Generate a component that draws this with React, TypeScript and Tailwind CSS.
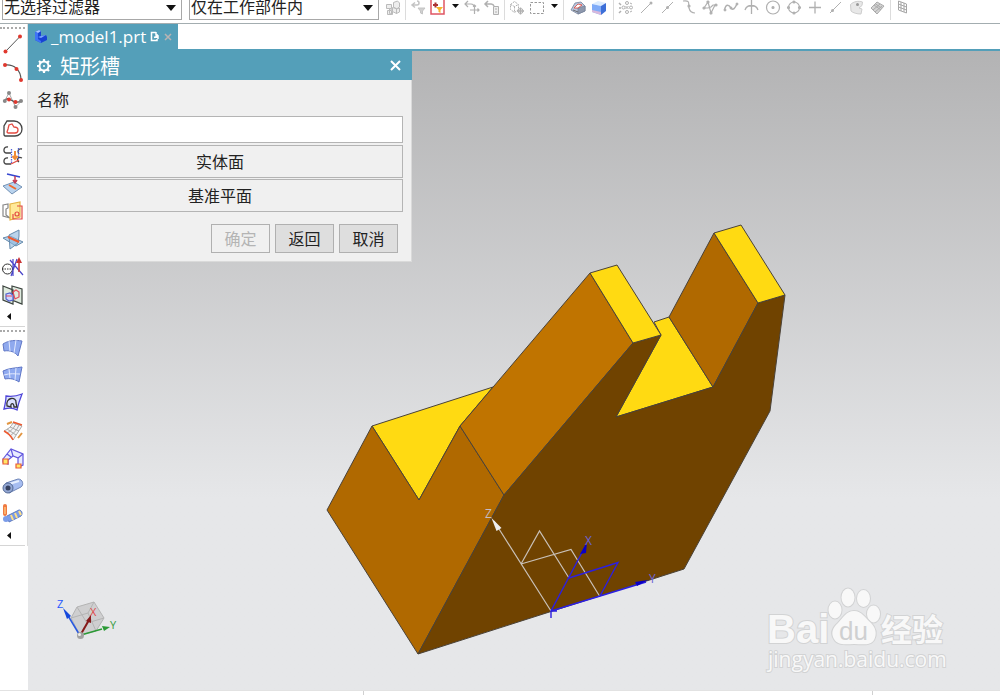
import type { ReactNode } from "react"

const GREY = "#b0b0b0"

const Caret = () => (
    <svg width="10" height="6" viewBox="0 0 10 6" aria-hidden="true">
        <path d="M0 0h10L5 6z" fill="#111" />
    </svg>
)

const Divider = () => <span className="mx-0.5 h-6 w-px shrink-0 bg-[#dcdcdc]" />

const FilterSelect = ({ label, value, width }: { label: string; value: string; width: string }) => (
    <span className={`relative shrink-0 ${width}`}>
        <select
            aria-label={label}
            className="block h-[27px] w-full appearance-none border border-[#a8a8a8] bg-white pl-px text-base leading-6 text-[#222]"
        >
            <option>{value}</option>
        </select>
        <span className="pointer-events-none absolute right-[6px] bottom-[9px] flex">
            <Caret />
        </span>
    </span>
)

// 16x16 icons of the selection bar
const topIcons: Record<string, ReactNode> = {
    "Selection scope": (
        <g fill="#eee" stroke="#bbb">
            <path d="M1.500 4.500h5v4h-5zM2.500 10.500h4v4h-4zM4.500 8.500l3 1v5l-3-1z" />
            <path d="M8.500 2.500l4-1.500 2 2v4l-3 2-3-2zM7.500 7.500l4 1v5l-4-2z" />
            <path d="M11.500 9l3-1v4l-3 1.500z" />
        </g>
    ),
    "Reset filters": (
        <g fill="none" stroke="#c4c4c4" strokeWidth="1.500">
            <path d="M2 5h5a2 2 0 0 0 0-4M5 2.500L2 5l3 2.500" />
            <path d="M8 8h7l-2.500 3v3l-2-1v-2z" fill="#d0d0d0" strokeWidth="1" />
        </g>
    ),
    "Add filter": (
        <g>
            <path d="M1-3h13v17H1z" fill="#fff" stroke="#e05563" strokeWidth="1.500" />
            <path d="M3 5h5M5.500 2.500v5" stroke="#a33" strokeWidth="2" />
            <path d="M6 7h7l-2.500 3v3l-2-1v-2z" fill="#f5b52c" />
        </g>
    ),
    "Snap reset": (
        <g fill="none" stroke={GREY} strokeWidth="1.200">
            <path d="M1 4h6a3 3 0 0 1 3 3M4 1L1 4l3 3" />
            <path d="M6 10h9M10.500 5v9M9 6.500L10.500 5 12 6.500M13.500 8.500L15 10l-1.500 1.500" />
        </g>
    ),
    "Snap list": (
        <g fill="none" stroke={GREY}>
            <path d="M1 4h6a3 3 0 0 1 3 2M4 1L1 4l3 3" strokeWidth="1.500" />
            <path d="M9.500 6.500h5v8h-5zM11 9h2M11 12h2" fill="#eee" />
        </g>
    ),
    "Deselect": (
        <g fill="none" stroke={GREY}>
            <path d="M1.500 4.500l4-3 4 3v5l-4 3-4-3zM1.500 4.500l4 2 4-2M5.500 6.500v6" strokeDasharray="2 1" />
            <path d="M8 11h7M11.500 7.500v7" strokeWidth="1.300" />
            <circle cx="11.500" cy="11" r="2.500" />
        </g>
    ),
    "Rectangle select": <path d="M1.500 2.500h13v11h-13z" fill="none" stroke="#999" strokeDasharray="2.500 1.500" />,
    "Shaded body": (
        <g stroke="#77839a" strokeWidth=".8">
            <path d="M1 10l4-7 6-1 4 4v5l-7 3z" fill="#b9c5dc" />
            <path d="M8 14V8l7-2v5z" fill="#8e98ad" />
            <path d="M4 8l4-4 4 1-4 3z" fill="#fff" stroke="#dd4438" />
            <path d="M3 10l5 2" stroke="#555" />
        </g>
    ),
    "Blue cube": (
        <g>
            <path d="M1 4l6-3 8 2-5 3z" fill="#dcecff" />
            <path d="M1 4l9 2v9l-9-3z" fill="#7fabf8" />
            <path d="M10 6l5-3v8l-5 4z" fill="#3d6fd8" />
            <path d="M1 10l9 2v3l-9-3z" fill="#d9b9dc" />
        </g>
    ),
    "Enable snap": (
        <g fill="none" stroke={GREY}>
            <path d="M1 3l2 2M1 8h2M1 13l2-2" strokeWidth="1.500" />
            <circle cx="9" cy="3" r="1.500" />
            <circle cx="13" cy="7.500" r="1.500" />
            <circle cx="9" cy="12" r="1.500" />
            <circle cx="5.500" cy="7.500" r="1.500" />
            <path d="M7.500 6l3 3M10.500 6l-3 3M12 3l2 1M12 12l2-1" />
        </g>
    ),
    "End point": (
        <g stroke={GREY} fill={GREY}>
            <path d="M2 13L12 3" />
            <circle cx="12" cy="3" r="1.500" stroke="none" />
        </g>
    ),
    "Mid point": (
        <g stroke={GREY} fill={GREY}>
            <path d="M2 13L13 2" />
            <circle cx="7.500" cy="7.500" r="1.500" stroke="none" />
        </g>
    ),
    "Control point": (
        <g stroke={GREY} fill="none" strokeWidth="1.200">
            <path d="M2 1c8-1 5 3 6 7s3 5 6 5" />
            <circle cx="8" cy="6" r="1" fill={GREY} />
        </g>
    ),
    "Pole": (
        <g stroke={GREY} fill="none" strokeWidth="1.200">
            <path d="M2 8l4-6 3 11 4-8M2 8h4l3-1 2-2h3" />
            <g fill={GREY}>
                <circle cx="2" cy="8" r="1" />
                <circle cx="6" cy="2" r="1" />
                <circle cx="9" cy="13" r="1" />
                <circle cx="14" cy="5" r="1" />
            </g>
        </g>
    ),
    "Spline point": (
        <g stroke={GREY} fill="none" strokeWidth="1.500">
            <path d="M1.500 10C3 3 6 5 8 8s4 0 6-4" />
            <g fill={GREY} strokeWidth="1">
                <circle cx="2" cy="10" r="1" />
                <circle cx="8" cy="8" r="1" />
                <circle cx="14" cy="4" r="1" />
            </g>
        </g>
    ),
    "Intersection": <path d="M1 10c2-6 11-6 13 0M7.500 0v14M5 6h5" fill="none" stroke={GREY} strokeWidth="1.300" />,
    "Arc center": (
        <g fill="none" stroke={GREY} strokeWidth="1.200">
            <circle cx="8" cy="7.500" r="6.500" />
            <circle cx="8" cy="7.500" r="1" fill={GREY} />
        </g>
    ),
    "Quadrant point": (
        <g fill="none" stroke={GREY} strokeWidth="1.200">
            <circle cx="8" cy="7.500" r="5.500" />
            <g fill="#b9b9b9">
                <circle cx="8" cy="2" r="1" />
                <circle cx="8" cy="13" r="1" />
                <circle cx="2.500" cy="7.500" r="1" />
                <circle cx="13.500" cy="7.500" r="1" />
            </g>
        </g>
    ),
    "Existing point": <path d="M2 7.500h12M8 1.500v12" stroke={GREY} strokeWidth="1.300" />,
    "Point on curve": (
        <g stroke={GREY} fill={GREY}>
            <path d="M2 13L13 2" />
            <circle cx="4.500" cy="10.500" r="1.500" stroke="none" />
        </g>
    ),
    "Point on face": (
        <g stroke="#cdcdcd" fill="#e8e8e8">
            <path d="M1.500 4.500c3-3 8-4 12-2.500l-.5 3.500-3 2.500 3 1-1 5c-4 0-8-1-10-3z" />
            <circle cx="8.500" cy="4.500" r="1.500" fill="#999" stroke="none" />
        </g>
    ),
    "Point on facet": (
        <path d="M1 8l6-6 7 4-7 8zM4 5l7 5M5 3.500l7 5M3 10l7-6M5 12l7-6" fill="#d4d4d4" stroke="#ababab" />
    ),
    "Grid": (
        <path d="M3.500 1l8 3v9l-8-3zM3.500 4l8 3M3.500 7l8 3M6 2v9M9 3v9" fill="none" stroke="#a6a6a6" />
    ),
}

const TopTool = ({ name }: { name: string }) => (
    <button type="button" title={name} aria-label={name} className="mb-1 flex h-4 w-5 shrink-0 items-center justify-center">
        <svg width="16" height="16" viewBox="0 0 16 16" className="overflow-visible" aria-hidden="true">
            {topIcons[name]}
        </svg>
    </button>
)

const TopCaret = ({ name }: { name: string }) => (
    <button type="button" aria-label={name} className="mb-3 flex w-[14px] shrink-0 justify-center">
        <svg width="7" height="4" viewBox="0 0 7 4" aria-hidden="true">
            <path d="M0 0h7L3.500 4z" fill="#111" />
        </svg>
    </button>
)

const snapTools = [
    "Enable snap", "End point", "Mid point", "Control point", "Pole", "Spline point", "Intersection",
    "Arc center", "Quadrant point", "Existing point", "Point on curve", "Point on face", "Point on facet",
]

function SelectionBar() {
    return (
        <header className="flex h-6 shrink-0 items-end overflow-hidden border-b border-[#a3adb0] bg-white pb-[3px] pl-0.5">
            <FilterSelect label="类型过滤器" value="无选择过滤器" width="mr-[7px] w-[180px]" />
            <FilterSelect label="选择范围" value="仅在工作部件内" width="mr-1 w-[190px]" />
            <TopTool name="Selection scope" />
            <Divider />
            <TopTool name="Reset filters" />
            <TopTool name="Add filter" />
            <TopCaret name="More filters" />
            <TopTool name="Snap reset" />
            <TopTool name="Snap list" />
            <Divider />
            <TopTool name="Deselect" />
            <TopTool name="Rectangle select" />
            <TopCaret name="More selection shapes" />
            <Divider />
            <div className="flex gap-px px-0.5">
                <TopTool name="Shaded body" />
                <TopTool name="Blue cube" />
            </div>
            <Divider />
            <div className="flex gap-px">
                {snapTools.map((name) => <TopTool key={name} name={name} />)}
            </div>
            <Divider />
            <TopTool name="Grid" />
        </header>
    )
}

// 20x20 icons of the two docked tool groups
const curveIcons: Record<string, ReactNode> = {
    "Line": (
        <g fill="#e0382e">
            <path d="M2.500 17.500L17 2.500" stroke="#555" />
            <circle cx="2.500" cy="17.500" r="2" />
            <circle cx="17" cy="2.500" r="2" />
        </g>
    ),
    "Arc": (
        <g fill="#e0382e">
            <path d="M2 3c9-1 16 5 16 15" fill="none" stroke="#555" strokeWidth="1.300" />
            <circle cx="2" cy="3" r="2" />
            <circle cx="13.500" cy="7" r="2" />
            <circle cx="18" cy="18" r="2" />
        </g>
    ),
    "Studio spline": (
        <g fill="#888">
            <path d="M1.500 11L6 3l6.500 14 6-6" fill="none" stroke="#aaa" />
            <path d="M1.500 11C4 8 5 8 8 10s7 3 10 1" fill="none" stroke="#555" strokeWidth="1.300" />
            <circle cx="6" cy="3" r="2" />
            <circle cx="1.800" cy="11" r="2" />
            <circle cx="12.500" cy="17" r="2" />
            <circle cx="18" cy="11" r="2" />
            <circle cx="6" cy="9.500" r="2" fill="#e0382e" />
            <circle cx="12.500" cy="12" r="2" fill="#e0382e" />
        </g>
    ),
    "Offset curve": (
        <g fill="none">
            <path d="M1 17V8l3-5h7c5 0 8 4 8 8s-3 7-7 7H2z" stroke="#444" strokeWidth="1.300" />
            <path d="M5 15l-1-1 1-3 1-4 3-1 2 3c3 0 4 1 4 3s-1 3-3 3z" stroke="#e34b42" strokeWidth="1.300" />
        </g>
    ),
    "Bridge curve": (
        <g fill="none" strokeWidth="1.300">
            <path d="M5 1C0 0 0 7 3 7h5M5 12c-5-1-5 6-2 6h5M19 3c-4-1-5 3-3 5M19 12c-4-2-6 2-3 4" stroke="#444" />
            <path d="M8.500 3v14M15.500 2v11" stroke="#5364dd" strokeDasharray="1.500 1" />
            <path d="M12 5v8M9.500 10l2.500 3 2.500-3" stroke="#f18b37" strokeWidth="2" />
            <path d="M8 18l8-4" stroke="#e34b42" />
        </g>
    ),
    "Project curve": (
        <g>
            <path d="M0 12l11-4 8 5-10 7z" fill="#b9d3ee" stroke="#7391b4" />
            <path d="M4 0l13 3" stroke="#3546d0" strokeWidth="1.500" />
            <path d="M12 2v6M10 6l2 3 2-3" stroke="#c33d55" strokeWidth="1.500" fill="none" />
            <path d="M6 11l7 4" stroke="#f06b2b" strokeWidth="2" />
        </g>
    ),
    "Combined projection": (
        <g fill="none" strokeWidth="1.200">
            <path d="M0 3l5-1v4l-2 1v6l4 3-7-2z" stroke="#888" />
            <path d="M7 2l10-2v15L7 18z" fill="#ffe998" stroke="#e4b343" />
            <path d="M14 4h5v13h-9v-5" stroke="#e34b42" />
            <circle cx="14" cy="12" r="2" stroke="#e34b42" />
        </g>
    ),
    "Intersection curve": (
        <g stroke="#668bad">
            <path d="M0 8l7-2 13 6-7 4z" fill="#bad3e9" />
            <path d="M6 5l10-5v6l-1 7-8 6z" fill="#8eb7dd" fillOpacity=".6" />
            <path d="M5 7l11 5" stroke="#ef5a30" strokeWidth="2" />
        </g>
    ),
    "Section curve": (
        <g fill="none">
            <circle cx="4.500" cy="11" r="5" stroke="#333" />
            <path d="M-1 11h11" stroke="#333" strokeDasharray="1.500 1" />
            <path d="M7 2l13 15M14 1L8 18M10 1v17" stroke="#4944c9" strokeWidth="1.200" />
            <path d="M16 3v11" stroke="#c93434" strokeWidth="1.500" />
            <path d="M13 5l3-6 3 6z" fill="#c93434" />
        </g>
    ),
    "Isoparametric": (
        <g strokeWidth="1.200">
            <path d="M0 0l10 4v14L0 14zM9 0l10 3v15L9 14z" fill="#dfebdf" stroke="#3c443f" />
            <path d="M3 8l4-1 3 2v5l-4 1-3-2z" fill="#cdd6ff" stroke="#5261cf" />
            <path d="M10 6l3-2 3 2v5l-4 2zM3 10h6" fill="none" stroke="#e34b5c" />
        </g>
    ),
}

const surfaceIcons: Record<string, ReactNode> = {
    "Ruled": (
        <g stroke="#6077c6">
            <path d="M0 7c6-4 13-4 19-3l-4 15C12 15 7 13 1 14z" fill="#8fa9ee" />
            <path d="M6 4l1 10M13 3l-2 13" fill="none" stroke="#e3eaff" />
        </g>
    ),
    "Curve mesh": (
        <g stroke="#6077c6">
            <path d="M0 6c6-3 13-3 19-4l-3 15C12 14 7 13 2 14z" fill="#8faaf0" />
            <path d="M6 4l1 9M13 3l-1 12M1 10c6-2 11-1 16-1" fill="none" stroke="#e3eaff" />
        </g>
    ),
    "Studio surface": (
        <g fill="none">
            <path d="M3 3c6 1 11 0 16-2-2 5-4 11-5 16-5-3-9-2-13-1 1-4 2-9 2-13z" fill="#dbe1ff" stroke="#4f45d8" strokeWidth="1.300" />
            <path d="M4 13c-2-9 10-10 9-3l1 4h-3c0-5-4-4-3 0z" stroke="#333" strokeWidth="1.300" />
        </g>
    ),
    "Extension": (
        <g fill="none">
            <path d="M10 2l9 3c-3 5-6 9-9 14-2-4-5-7-9-9 4-2 7-4 9-8z" fill="#f3f3f3" stroke="#aaa" />
            <path d="M13 3c-3 5-5 7-9 9M16 4c-2 5-5 8-9 11M7 6l9 4M4 8l9 6" stroke="#aaa" />
            <path d="M1 10c4 2 7 5 9 9M10 1l9 3" stroke="#ef5a30" strokeWidth="1.500" />
            <path d="M4 3l5-2M15 17l4-5" stroke="#e29642" strokeWidth="2" />
        </g>
    ),
    "Swept": (
        <g fill="none" stroke="#6257de" strokeWidth="1.200">
            <path d="M0 10L8 0l12 5v11l-5 2V9l-5-2-5 4v4l-5-2z" fill="#e8ecff" />
            <path d="M8 0l2 7M15 9l5-4M4 5l4 3" />
            <path d="M0 10h5v5H0zM13 15h5v4h-5z" fill="#ffe768" stroke="#eb5c36" />
        </g>
    ),
    "Tube": (
        <g>
            <path d="M6 16L18 10c3-2 2-8-3-8L3 6z" fill="#a6bdf1" stroke="#7187b9" />
            <path d="M6 7l10-3" stroke="#e6efff" strokeWidth="2" />
            <ellipse cx="5" cy="11" rx="5" ry="5" fill="#93a7d3" stroke="#526894" />
            <ellipse cx="5" cy="11" rx="2.500" ry="2.500" fill="#36415f" />
        </g>
    ),
    "Sweep along guide": (
        <g>
            <path d="M4 11l12-6c3 0 4 4 2 6L6 17z" fill="#7b9ce8" stroke="#5f7bc0" strokeLinejoin="round" />
            <path d="M8 10l2 5M12 8l2 5M16 6l2 4" stroke="#ffe086" strokeWidth="2" />
            <path d="M2 1v8" stroke="#ef7940" strokeWidth="4" strokeLinecap="round" />
            <path d="M2 2v7" stroke="#ffc278" strokeWidth="1.500" />
            <circle cx="3" cy="14" r="3" fill="#7b9ce8" />
        </g>
    ),
}

const ToolGroup = ({ icons, label }: { icons: Record<string, ReactNode>; label: string }) => (
    <div role="toolbar" aria-label={label} className="flex flex-col items-center border-b border-[#d5d5d5] pt-[3px] pb-1">
        <div className="mb-px w-full border-t-2 border-dotted border-[#aaa]" />
        {Object.entries(icons).map(([name, icon]) => (
            <button key={name} type="button" title={name} aria-label={name} className="flex h-7 w-full items-center justify-center">
                <svg width="20" height="20" viewBox="0 0 20 20" className="overflow-visible" aria-hidden="true">{icon}</svg>
            </button>
        ))}
        <button type="button" aria-label="More" className="flex h-3 w-full items-center pl-[7px]">
            <svg width="4" height="7" viewBox="0 0 4 7" aria-hidden="true"><path d="M4 0v7L0 3.500z" fill="#111" /></svg>
        </button>
    </div>
)

const YELLOW = "#ffda12"
const OCHRE = "#b06900"

const faces = [
    { fill: YELLOW, points: "372,426 493,387 460,426 419,500" },
    { fill: OCHRE, points: "327,510 372,426 419,500 460,426 504,495 418,654" },
    { fill: "#c07400", points: "460,426 590,273 633,343 504,495" },
    { fill: YELLOW, points: "654,322 669,317 713,387 616,417 661,335" },
    { fill: OCHRE, points: "669,317 714,233 758,303 713,387" },
    { fill: "#704300", points: "418,654 504,495 633,343 661,335 616,417 713,387 758,303 785,295 770,411 684,569" },
    { fill: YELLOW, points: "590,273 617,265 661,335 633,343" },
    { fill: YELLOW, points: "714,233 741,225 785,295 758,303" },
]

const SolidModel = () => (
    <svg className="h-full w-full" viewBox="28 51 972 639" role="img" aria-label="model1">
        <g stroke="#4a4238" strokeWidth="1" strokeLinejoin="round">
            {faces.map((face) => <polygon key={face.points} fill={face.fill} points={face.points} />)}
        </g>
        {/* datum coordinate system */}
        <g fill="none" stroke="#c9c1b8" strokeWidth="1.200">
            <path d="M551 611L494 521M521 564L539.500 531 569 578M521 564L571 549.500 599.500 596" />
            <path d="M491.500 518l10 10-5 3z" fill="#eee" stroke="none" />
        </g>
        <g fill="none" stroke="#2c1fe0" strokeWidth="1.400">
            <path d="M551 618v-7L586 545M551 611L646 582M569 578L618 562.500 600 596M551 611h6" />
            <path d="M587 542l-1 11-6 1zM648 580l-11 6-2-4z" fill="#0a00c4" stroke="none" />
        </g>
        <g className="font-['Open_Sans',sans-serif] text-[12px]" fill="#c4bdc6">
            <text x="485" y="518">Z</text>
            <text x="585" y="545" fill="#6c63d8">X</text>
            <text x="649" y="583" fill="#6c63d8">Y</text>
        </g>
    </svg>
)

const ViewTriad = () => (
    <svg className="absolute bottom-11 left-5" width="72" height="50" viewBox="48 596 72 50" aria-hidden="true">
        <path d="M77 607l17-5 10 16-8 13-16 4-9-17z" fill="#cfcfd0" stroke="#b4b4b4" />
        <path d="M77 607l10 16 17-5M87 623l-7 12M71 618l17-5 6-11M88 613l8 18" fill="none" stroke="#b4b4b4" />
        <path d="M79 634L67 614" stroke="#2858e0" strokeWidth="1.500" />
        <path d="M63 608l8 8-4 3z" fill="#1548dc" />
        <path d="M81 635l21-6" stroke="#2b9a35" strokeWidth="1.500" />
        <path d="M110 627l-8-1 2 5z" fill="#2b9a35" />
        <path d="M81 634l8-14" stroke="#861a1a" strokeWidth="2" />
        <path d="M91 615v8l-5-2z" fill="#861a1a" />
        <circle cx="80.500" cy="635.500" r="3.500" fill="#a2a2a2" />
        <circle cx="79.500" cy="634.500" r="1.500" fill="#eee" />
        <g className="font-['Open_Sans',sans-serif] text-[11px]">
            <text x="57" y="608" fill="#2858ff">Z</text>
            <text x="90" y="616" fill="#e04545">X</text>
            <text x="110" y="629" fill="#369a3e">Y</text>
        </g>
    </svg>
)

const Watermark = () => (
    <svg className="absolute right-12 bottom-3" width="190" height="94" viewBox="762 584 190 94" aria-hidden="true">
        <g fill="#f8f8f8" stroke="#d2d3d4" strokeWidth="2" paintOrder="stroke">
            <text x="767" y="643" className="font-['Liberation_Sans',sans-serif] text-[40px] font-bold">Bai</text>
            <ellipse cx="835" cy="610" rx="6.500" ry="8.500" />
            <ellipse cx="848" cy="597.500" rx="6.500" ry="9" />
            <ellipse cx="863.500" cy="598.500" rx="6.500" ry="8.500" />
            <ellipse cx="873.500" cy="614" rx="6.500" ry="8.500" />
            <path d="M854 611c-8 0-11 7-16 12-6 5-7 11-4 16 4 7 12 5 20 5s16 2 20-4c3-6 2-12-3-17-6-5-9-12-17-12z" />
            <text x="881" y="641" className="font-['Noto_Sans_CJK_SC',sans-serif] text-[31px] font-bold">经验</text>
            <text x="768" y="667" className="font-['Open_Sans',sans-serif] text-[21px]">jingyan.baidu.com</text>
        </g>
        <text x="839" y="640" fill="#cfd0d1" className="font-['Liberation_Sans',sans-serif] text-[26px]">du</text>
    </svg>
)

const GearIcon = () => (
    <svg width="14" height="14" viewBox="0 0 14 14" fill="none" stroke="#fff" aria-hidden="true">
        <circle cx="7" cy="7" r="4.500" strokeWidth="2" />
        <path d="M7 0v2.500M7 11.500V14M0 7h2.500M11.500 7H14M2 2l1.800 1.800M10.200 10.200L12 12M2 12l1.800-1.800M10.200 3.800L12 2" strokeWidth="2.200" />
        <circle cx="7" cy="7" r="1" fill="#fff" stroke="none" />
    </svg>
)

const wideButton = "h-[33px] w-full border border-[#b4b4b4] bg-[#f0f0f0]"
const footButton = "h-[29px] w-[59px] border border-[#b0b0b0] bg-[#dedede] disabled:bg-[#f0f0f0] disabled:text-[#b4b4b4]"

function SlotDialog() {
    return (
        <section
            role="dialog"
            aria-labelledby="slot-title"
            className="absolute top-0 left-0 w-96 border-r border-b border-[#dadada] bg-[#f0f0f0] text-base text-[#222]"
        >
            <div className="-mr-px flex h-[29px] items-center bg-[#549fb9] pr-2.5 pl-[9px] text-white">
                <GearIcon />
                <h1 id="slot-title" className="ml-[9px] pt-0.5 text-xl leading-7">矩形槽</h1>
                <button type="button" aria-label="关闭" className="ml-auto p-px">
                    <svg width="11" height="11" viewBox="0 0 11 11" stroke="#fff" strokeWidth="2" aria-hidden="true">
                        <path d="M1 1l9 9M10 1l-9 9" />
                    </svg>
                </button>
            </div>
            <form className="py-2 pr-2 pl-[9px]" onSubmit={(e) => e.preventDefault()}>
                <label htmlFor="slot-name" className="block leading-6">名称</label>
                <input id="slot-name" type="text" className="mt-1 block h-[27px] w-full border border-[#b4b4b4] bg-white px-1" />
                <div className="mt-0.5 flex flex-col gap-px">
                    <button type="button" className={wideButton}>实体面</button>
                    <button type="button" className={wideButton}>基准平面</button>
                </div>
                <div className="mt-3 flex justify-end gap-[5px] pr-[5px]">
                    <button type="submit" disabled className={footButton}>确定</button>
                    <button type="button" className={footButton}>返回</button>
                    <button type="button" className={footButton}>取消</button>
                </div>
            </form>
        </section>
    )
}

function PartTabs() {
    return (
        <nav className="flex h-[27px] shrink-0 border-b-2 border-[#549fb9] bg-white">
            <div className="flex w-[150px] items-center bg-[#549fb9] pr-[6px] pl-[6px] text-white">
                <svg width="13" height="13" viewBox="0 0 13 13" aria-hidden="true">
                    <path d="M1 2l4-2 2 1v5l5-1 1 2v3l-6 3-6-3z" fill="#1743d4" />
                    <path d="M1 2l4-2 2 1-3 2z" fill="#a9c6ff" />
                    <path d="M4 7l3-1 5-1-5 3z" fill="#7ca4ff" />
                    <path d="M1 2l3 1v6l3 2v2l-6-3z" fill="#3f73f5" />
                </svg>
                <a href="#model1" className="ml-1 text-[17px] leading-6">_model1.prt</a>
                <svg className="ml-auto" width="10" height="11" viewBox="0 0 10 11" fill="none" stroke="#fff" strokeWidth="1.500" aria-hidden="true">
                    <path d="M6 1.500H1.500v8H7V8M6 1v3h2M4 6.500l4-1.500v3" />
                </svg>
                <button type="button" aria-label="关闭标签" className="ml-1">
                    <svg width="8" height="8" viewBox="0 0 8 8" stroke="#b9b4b4" strokeWidth="1.500" aria-hidden="true">
                        <path d="M1 1l6 6M7 1L1 7" />
                    </svg>
                </button>
            </div>
        </nav>
    )
}

export default function App() {
    return (
        <div className="flex h-screen flex-col overflow-hidden bg-white font-['Open_Sans','Noto_Sans_CJK_SC',sans-serif]">
            <SelectionBar />
            <div className="flex min-h-0 flex-1">
                <aside className="w-7 shrink-0">
                    <div className="border-r border-[#dedede] pr-0.5">
                        <ToolGroup label="曲线" icons={curveIcons} />
                        <ToolGroup label="曲面" icons={surfaceIcons} />
                    </div>
                </aside>
                <div className="flex min-w-0 flex-1 flex-col">
                    <PartTabs />
                    <main className="relative min-h-0 flex-1 bg-linear-to-b from-[#b3b3b4] to-[#e6e7e9] to-70%">
                        <SolidModel />
                        <ViewTriad />
                        <Watermark />
                        <SlotDialog />
                    </main>
                </div>
            </div>
            <footer className="flex h-[5px] shrink-0 border-t border-[#e2e2e2] bg-white">
                <div className="w-[363px]" />
                <div className="flex-1 border-l border-[#d0d0d0]" />
                <div className="w-32 border-l border-[#d0d0d0]" />
            </footer>
        </div>
    )
}
